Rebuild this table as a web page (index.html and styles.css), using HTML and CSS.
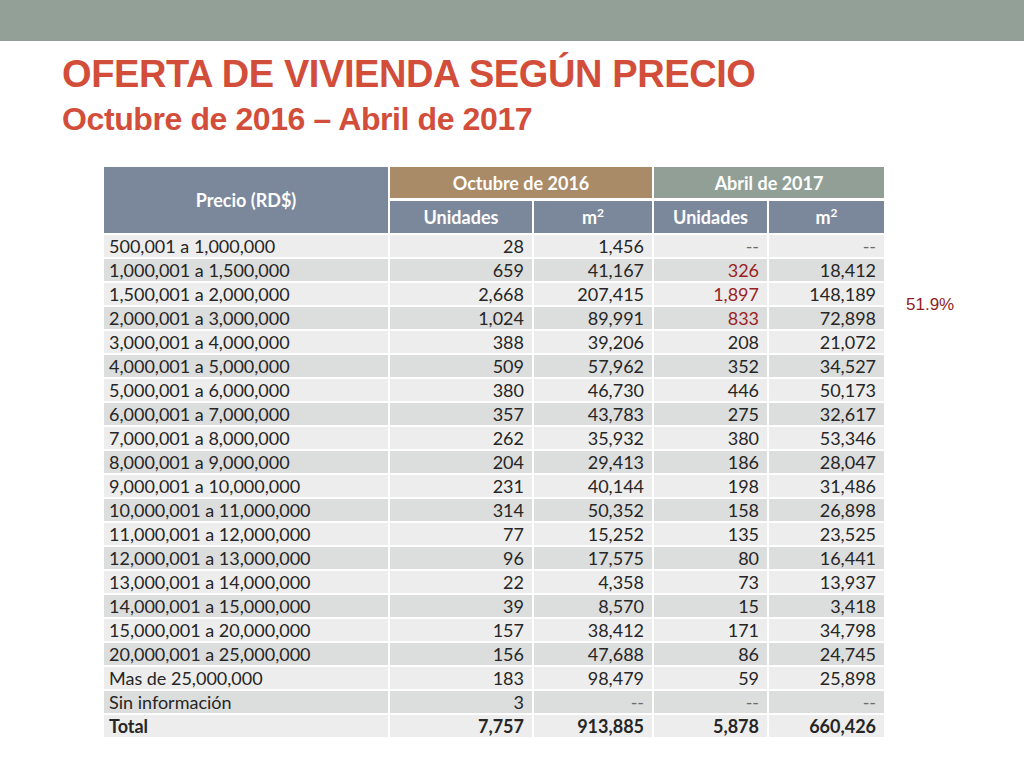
FILE: index.html
```html
<!DOCTYPE html>
<html lang="es">
<head>
<meta charset="utf-8">
<title>Oferta de vivienda según precio</title>
<link rel="stylesheet" href="styles.css">
</head>
<body>
<div class="topbar"></div>
<header class="heading">
  <h1 class="title">OFERTA DE VIVIENDA SEGÚN PRECIO</h1>
  <h2 class="subtitle">Octubre de 2016 – Abril de 2017</h2>
</header>
<main class="content">
  <table class="data">
    <colgroup>
      <col class="c1"><col class="c2"><col class="c3"><col class="c4"><col class="c5">
    </colgroup>
    <thead>
      <tr class="h1row">
        <th rowspan="2" class="h-slate h-price">Precio (RD$)</th>
        <th colspan="2" class="h-brown">Octubre de 2016</th>
        <th colspan="2" class="h-green last">Abril de 2017</th>
      </tr>
      <tr class="h2row">
        <th class="h-slate">Unidades</th>
        <th class="h-slate">m<sup>2</sup></th>
        <th class="h-slate">Unidades</th>
        <th class="h-slate last">m<sup>2</sup></th>
      </tr>
    </thead>
    <tbody>
      <tr><td>500,001 a 1,000,000</td><td>28</td><td>1,456</td><td class="dash">--</td><td class="dash">--</td></tr>
      <tr><td>1,000,001 a 1,500,000</td><td>659</td><td>41,167</td><td class="red">326</td><td>18,412</td></tr>
      <tr><td>1,500,001 a 2,000,000</td><td>2,668</td><td>207,415</td><td class="red">1,897</td><td>148,189</td></tr>
      <tr><td>2,000,001 a 3,000,000</td><td>1,024</td><td>89,991</td><td class="red">833</td><td>72,898</td></tr>
      <tr><td>3,000,001 a 4,000,000</td><td>388</td><td>39,206</td><td>208</td><td>21,072</td></tr>
      <tr><td>4,000,001 a 5,000,000</td><td>509</td><td>57,962</td><td>352</td><td>34,527</td></tr>
      <tr><td>5,000,001 a 6,000,000</td><td>380</td><td>46,730</td><td>446</td><td>50,173</td></tr>
      <tr><td>6,000,001 a 7,000,000</td><td>357</td><td>43,783</td><td>275</td><td>32,617</td></tr>
      <tr><td>7,000,001 a 8,000,000</td><td>262</td><td>35,932</td><td>380</td><td>53,346</td></tr>
      <tr><td>8,000,001 a 9,000,000</td><td>204</td><td>29,413</td><td>186</td><td>28,047</td></tr>
      <tr><td>9,000,001 a 10,000,000</td><td>231</td><td>40,144</td><td>198</td><td>31,486</td></tr>
      <tr><td>10,000,001 a 11,000,000</td><td>314</td><td>50,352</td><td>158</td><td>26,898</td></tr>
      <tr><td>11,000,001 a 12,000,000</td><td>77</td><td>15,252</td><td>135</td><td>23,525</td></tr>
      <tr><td>12,000,001 a 13,000,000</td><td>96</td><td>17,575</td><td>80</td><td>16,441</td></tr>
      <tr><td>13,000,001 a 14,000,000</td><td>22</td><td>4,358</td><td>73</td><td>13,937</td></tr>
      <tr><td>14,000,001 a 15,000,000</td><td>39</td><td>8,570</td><td>15</td><td>3,418</td></tr>
      <tr><td>15,000,001 a 20,000,000</td><td>157</td><td>38,412</td><td>171</td><td>34,798</td></tr>
      <tr><td>20,000,001 a 25,000,000</td><td>156</td><td>47,688</td><td>86</td><td>24,745</td></tr>
      <tr><td>Mas de 25,000,000</td><td>183</td><td>98,479</td><td>59</td><td>25,898</td></tr>
      <tr><td>Sin información</td><td>3</td><td class="dash">--</td><td class="dash">--</td><td class="dash">--</td></tr>
      <tr class="total"><td>Total</td><td>7,757</td><td>913,885</td><td>5,878</td><td>660,426</td></tr>
    </tbody>
  </table>
  <p class="note">51.9%</p>
</main>
</body>
</html>
```

FILE: styles.css
```css
html, body {
  margin: 0;
  padding: 0;
  background: #ffffff;
}

body {
  width: 1024px;
  height: 768px;
  overflow: hidden;
  font-family: "Liberation Sans", Arial, sans-serif;
}

.topbar {
  height: 41px;
  background: #93a097;
}

.heading {
  padding-left: 62px;
  margin-top: 14px;
}

.title {
  margin: 0;
  font-size: 38px;
  line-height: 38px;
  font-weight: bold;
  letter-spacing: -0.4px;
  color: #d24e3a;
}

.subtitle {
  margin: 10px 0 0;
  font-size: 32px;
  line-height: 32px;
  font-weight: bold;
  letter-spacing: -0.4px;
  color: #d24e3a;
}

.content {
  display: flex;
  align-items: flex-start;
  margin-top: 32px;
  padding-left: 104px;
}

.data {
  table-layout: fixed;
  width: 780px;
  border-collapse: separate;
  border-spacing: 0;
  font-family: Lato, "Open Sans", sans-serif;
  font-size: 18px;
  color: #262626;
}

.c1 { width: 286px; }
.c2 { width: 144px; }
.c3 { width: 120px; }
.c4 { width: 115px; }
.c5 { width: 115px; }

.data th {
  color: #ffffff;
  font-weight: bold;
  font-size: 18px;
  text-align: center;
  padding: 0;
  border-right: 2px solid #ffffff;
}

.data th.last {
  border-right: 0;
}

.h1row th {
  height: 31px;
  border-bottom: 3px solid #ffffff;
}

.h2row th {
  height: 32px;
  border-bottom: 2px solid #ffffff;
}

.data th.h-price {
  border-bottom: 2px solid #ffffff;
}

.h-slate { background: #7b889b; }
.h-brown { background: #a98b68; }
.h-green { background: #929f96; }

.data sup {
  font-size: 12px;
  line-height: 0;
  vertical-align: 7px;
}

.data td {
  padding: 0 8px 0 0;
  height: 22px;
  line-height: 22px;
  text-align: right;
  white-space: nowrap;
  border-right: 2px solid #ffffff;
  border-bottom: 2px solid #ffffff;
  background: #ededed;
}

.data td:first-child {
  text-align: left;
  padding: 0 0 0 5px;
}

.data td:last-child {
  border-right: 0;
}

.data tbody tr:nth-child(even) td {
  background: #dcdddd;
}

.data td.red {
  color: #9a1f22;
}

.data td.dash {
  color: #6b6b6b;
}

.total td {
  font-weight: bold;
}

.note {
  margin: 128px 0 0 22px;
  font-family: "Liberation Sans", Arial, sans-serif;
  font-size: 17px;
  line-height: 20px;
  color: #8f1d1f;
}
```
